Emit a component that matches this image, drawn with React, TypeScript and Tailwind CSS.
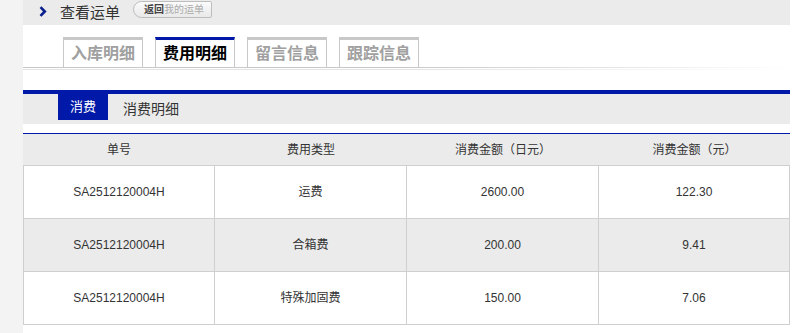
const font = 'font-["Liberation_Sans","Noto_Sans_CJK_SC",sans-serif]';

const tabs = [
  { label: '入库明细', active: false },
  { label: '费用明细', active: true },
  { label: '留言信息', active: false },
  { label: '跟踪信息', active: false },
];

const rows = [
  { no: 'SA2512120004H', type: '运费', jpy: '2600.00', cny: '122.30' },
  { no: 'SA2512120004H', type: '合箱费', jpy: '200.00', cny: '9.41' },
  { no: 'SA2512120004H', type: '特殊加固费', jpy: '150.00', cny: '7.06' },
];

const cols = ['单号', '费用类型', '消费金额（日元）', '消费金额（元）'];

export default function App() {
  return (
    <div className={`flex h-[333px] w-[810px] bg-white text-[#333] ${font}`}>
      <div className="w-[23px] shrink-0 bg-[#f3f3f3]" />
      <div className="w-[767px] shrink-0">
        {/* title bar */}
        <div className="flex h-[25px] items-center bg-[#ebebeb]">
          <svg className="ml-[16px] mb-[2px] h-[11px] w-[8px]" viewBox="0 0 8 11">
            <path d="M1.5 1.2l4.3 4.3-4.3 4.3" fill="none" stroke="#0a1f8f" strokeWidth="2.6" />
          </svg>
          <span className="ml-[13px] text-[15px] leading-none">查看运单</span>
          <button className="relative ml-[13px] mb-[6px] flex h-[17px] w-[79px] items-center rounded-l-[9px] rounded-r-[2px] border border-[#bdbdbd] bg-gradient-to-b from-[#fbfbfb] to-[#e9e9e9] pl-[10px] text-[10px] leading-none">
            <span className="font-bold text-[#444]">返回</span>
            <span className="text-[#aaa]">我的运单</span>
          </button>
        </div>

        {/* tabs */}
        <div className="mt-[12px] flex h-[30px] items-end gap-[12px] pl-[40px]">
          {tabs.map((t) => (
            <div
              key={t.label}
              className={
                t.active
                  ? 'flex h-[30px] w-[80px] items-center justify-center border-x border-t-[3px] border-x-[#c8c8c8] border-t-[#0019a8] bg-white text-[16px] font-bold text-black'
                  : 'flex h-[30px] w-[80px] items-center justify-center border-x border-t-[3px] border-x-[#c8c8c8] border-t-[#c8c8c8] bg-white text-[16px] font-bold text-[#a0a0a0]'
              }
            >
              {t.label}
            </div>
          ))}
        </div>
        <div className="h-px bg-gradient-to-r from-[#c8c8c8] via-[#c8c8c8] to-white" />
        <div className="mt-px h-px bg-gradient-to-r from-[#e4e4e4] via-[#e4e4e4] to-white" />

        {/* section header */}
        <div className="mt-[20px] h-[4px] bg-[#0019a8]" />
        <div className="flex h-[30px] bg-[#ebebeb]">
          <div className="ml-[35px] flex h-[26px] w-[50px] items-center justify-center bg-[#0019a8] text-[13px] text-white">
            消费
          </div>
          <div className="ml-[15px] flex h-[30px] items-center text-[14px]">消费明细</div>
        </div>

        {/* table */}
        <div className="mt-[9px] h-px bg-[#0019a8]" />
        <div>
          <div className="grid h-[32px] grid-cols-[192px_192px_192px_191px] items-center border-b border-[#cfcfcf] bg-[#ebebeb] text-[12px]">
            {cols.map((c) => (
              <div key={c} className="text-center">
                {c}
              </div>
            ))}
          </div>
          {rows.map((r, i) => (
            <div
              key={i}
              className={`grid h-[53px] grid-cols-[192px_192px_192px_191px] border-b border-[#cfcfcf] text-[12px] ${
                i === 1 ? 'bg-[#ebebeb]' : 'bg-white'
              }`}
            >
              <div className="flex items-center justify-center border-x border-[#cfcfcf]">{r.no}</div>
              <div className="flex items-center justify-center border-r border-[#cfcfcf]">{r.type}</div>
              <div className="flex items-center justify-center border-r border-[#cfcfcf]">{r.jpy}</div>
              <div className="flex items-center justify-center border-r border-[#cfcfcf]">{r.cny}</div>
            </div>
          ))}
        </div>
      </div>
    </div>
  );
}
